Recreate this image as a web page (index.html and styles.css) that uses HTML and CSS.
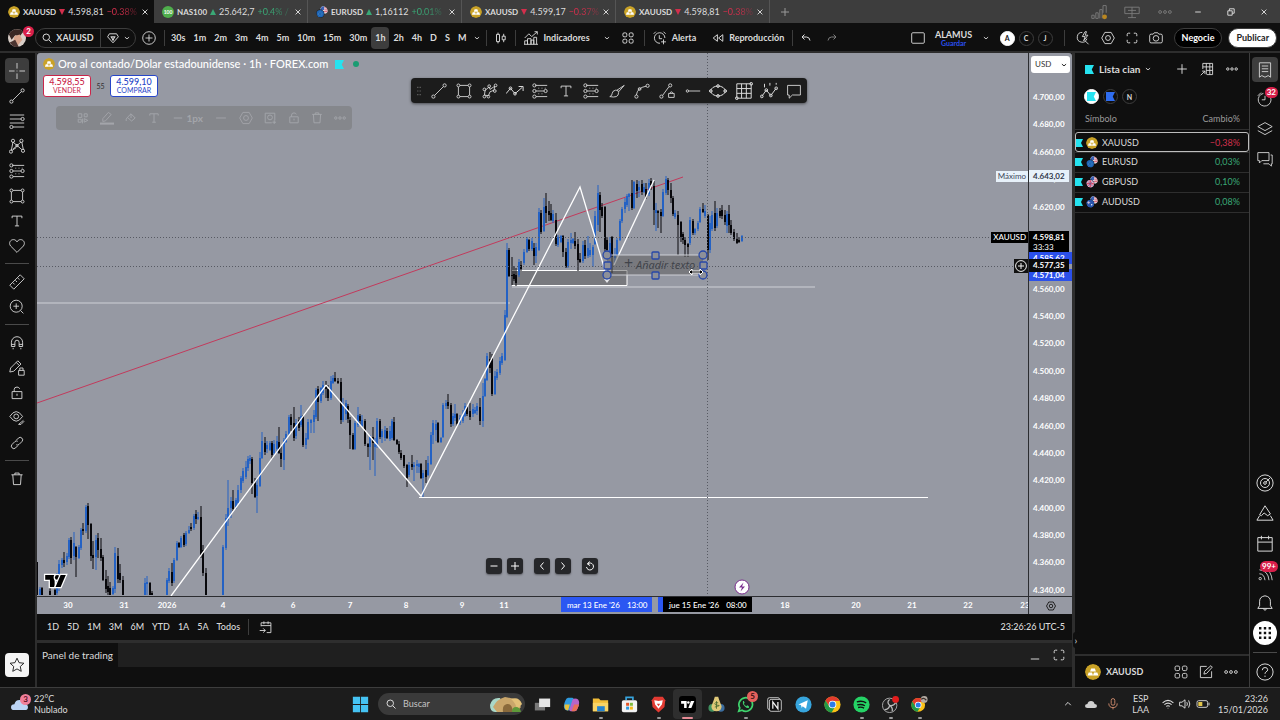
FILE: index.html
```html
<!DOCTYPE html>
<html lang="es">
<head>
    <meta charset="UTF-8">
    <meta name="viewport" content="width=device-width, initial-scale=1.0">
    <title>XAUUSD 4.598,81</title>
    <link rel="stylesheet" href="styles.css">
</head>
<body>

<!-- Icon sprite -->
<svg class="sprite" aria-hidden="true">
    <symbol id="gold" viewBox="0 0 20 20"><circle cx="10" cy="10" r="10" fill="#c9a227"/><path d="M7.7 5.5h4.6l1.4 4H6.3zM4.6 10.5h4.2l1.2 4H3.2zM11.2 10.5h4.2l1.4 4H10z" fill="#fff"/></symbol>
    <symbol id="pair" viewBox="0 0 20 20"><circle cx="13.5" cy="6.5" r="6.3" fill="#e9e4ea"/><path d="M8 3.4A6.3 6.3 0 0 1 13.5.2v6.3H7.2z" fill="#3c62b5"/><path d="M14 3h4.800M14 6.500h5.800M12 9.500h7" stroke="#d9475a" stroke-width="1.500"/><circle cx="7" cy="13" r="7" fill="#111"/><circle cx="7" cy="13" r="6.200" fill="#1f65b5"/><circle cx="7" cy="13" r="3" fill="none" stroke="#6fa6c9" stroke-dasharray="1 1.200"/></symbol>
    <symbol id="pair-gb" viewBox="0 0 20 20"><use href="#pair"/><circle cx="7" cy="13" r="6.200" fill="#e8a9bb"/><path d="M7 7v12M1 13h12" stroke="#cf3556" stroke-width="1.800"/><path d="M3 9l8 8M11 9l-8 8" stroke="#4667ad"/></symbol>
    <symbol id="pair-au" viewBox="0 0 20 20"><use href="#pair"/><circle cx="7" cy="13" r="6.200" fill="#2a55ad"/><path d="M2 11h5M4.500 8.500v5" stroke="#e8c8d8" stroke-width="1.200"/><circle cx="9.500" cy="14.500" r="1.200" fill="#fff"/></symbol>
    <symbol id="flag" viewBox="0 0 10 10"><path d="M0 0h10L7.500 5l2.500 5H0z" fill="currentColor"/></symbol>
    <symbol id="close" viewBox="0 0 20 20"><path d="M4 4l12 12M16 4L4 16"/></symbol>
    <symbol id="plus" viewBox="0 0 20 20"><path d="M10 2v16M2 10h16"/></symbol>
    <symbol id="minus" viewBox="0 0 20 20"><path d="M3 10h14"/></symbol>
    <symbol id="plus-circle" viewBox="0 0 20 20"><circle cx="10" cy="10" r="9"/><path d="M10 5v10M5 10h10"/></symbol>
    <symbol id="chevron" viewBox="0 0 20 20"><path d="M3 7l7 6 7-6"/></symbol>
    <symbol id="left" viewBox="0 0 20 20"><path d="M13 3l-6 7 6 7"/></symbol>
    <symbol id="right" viewBox="0 0 20 20"><path d="M7 3l6 7-6 7"/></symbol>
    <symbol id="up" viewBox="0 0 20 20"><path d="M3 13l7-7 7 7"/></symbol>
    <symbol id="search" viewBox="0 0 20 20"><circle cx="8.500" cy="8.500" r="6.500"/><path d="M13.500 13.500L19 19"/></symbol>
    <symbol id="gem" viewBox="0 0 20 20"><path d="M4 3h12l3 5-9 10L1 8zM6 8h8M10 8v6M7 8l3 6 3-6"/></symbol>
    <symbol id="more" viewBox="0 0 20 20"><circle cx="3" cy="10" r="2"/><circle cx="10" cy="10" r="2"/><circle cx="17" cy="10" r="2"/></symbol>
    <symbol id="candles" viewBox="0 0 20 20"><path d="M5 1v3M5 16v3M2.500 4h5v12h-5zM14.500 3v4M14.500 13v4M12 7h5v6h-5z"/></symbol>
    <symbol id="indicator" viewBox="0 0 20 20"><path d="M1 19v-5h4v5M5 19v-8h5v8M10 19v-6h4v6M14 19V9h4v10M0 19h20M1 10l6-6 4 4 8-7M19 1l-4 0M19 1v4"/></symbol>
    <symbol id="grid4" viewBox="0 0 20 20"><rect x="1.500" y="1.500" width="6.500" height="6.500" rx="2"/><rect x="12" y="1.500" width="6.500" height="6.500" rx="2"/><rect x="1.500" y="12" width="6.500" height="6.500" rx="2"/><rect x="12" y="12" width="6.500" height="6.500" rx="2"/></symbol>
    <symbol id="alarm" viewBox="0 0 20 20"><path d="M17 10a7.500 7.500 0 1 0-7 7.500M9 6v5h4M1 4l3-3M15 1l3 3M15 12v7M11.500 15.500h7"/></symbol>
    <symbol id="replay" viewBox="0 0 20 20"><path d="M9 4.500v11L2 10zM18 4.500v11L11 10z"/></symbol>
    <symbol id="undo" viewBox="0 0 20 20"><path d="M7 3L2 8l5 5M2 8h9q6 0 7 7"/></symbol>
    <symbol id="redo" viewBox="0 0 20 20"><path d="M13 3l5 5-5 5M18 8H9q-6 0-7 7"/></symbol>
    <symbol id="layout" viewBox="0 0 20 20"><rect x="1" y="2.500" width="18" height="15" rx="1.500"/></symbol>
    <symbol id="quick" viewBox="0 0 20 20"><path d="M9 2a7 7 0 1 0 6.500 9M13 14l5 5M13 1L9 8h4l-2 6 6-8h-4l2-5z"/></symbol>
    <symbol id="hex" viewBox="0 0 20 20"><path d="M5.500 2h9L19 10l-4.500 8h-9L1 10z"/><circle cx="10" cy="10" r="3.500"/></symbol>
    <symbol id="full" viewBox="0 0 20 20"><path d="M2 7V4q0-2 2-2h3M13 2h3q2 0 2 2v3M18 13v3q0 2-2 2h-3M7 18H4q-2 0-2-2v-3"/></symbol>
    <symbol id="camera" viewBox="0 0 20 20"><path d="M3 4.500h3L7.500 2.500h5L14 4.500h3q2 0 2 2V15q0 2-2 2H3q-2 0-2-2V6.500q0-2 2-2z"/><circle cx="10" cy="10.500" r="4"/></symbol>
    <symbol id="signal" viewBox="0 0 20 20"><path d="M1 18v-4h3v4zM6 18v-7h3v7zM11 18V7h3v11M19 11V2h-4v9"/><circle cx="17" cy="16" r="3" fill="#b98620" stroke="none"/></symbol>
    <symbol id="screens" viewBox="0 0 20 20"><path d="M1 4h18v8H1zM10 4v8M10 12v5M5 17h10M5 8h10"/></symbol>
    <symbol id="restore" viewBox="0 0 20 20"><path d="M2 7h11v11H2zM6 7V2h12v11h-5"/></symbol>
    <symbol id="cross" viewBox="0 0 20 20"><path d="M10 0v7M10 13v7M0 10h7M13 10h7M9.500 10h1"/></symbol>
    <symbol id="trend" viewBox="0 0 20 20"><circle cx="3" cy="17" r="2"/><circle cx="17" cy="3" r="2"/><path d="M4.500 15.500l11-11"/></symbol>
    <symbol id="fib" viewBox="0 0 20 20"><path d="M1 2.500h18M1 7.500h14M1 12.500h18M5 17.500h14"/><circle cx="17" cy="7.500" r="2"/><circle cx="3" cy="17.500" r="2"/></symbol>
    <symbol id="pattern" viewBox="0 0 20 20"><path d="M3 15L5 5l11 9.500M16 5l2 10M5 14l10-9M3 16l6-4"/><circle cx="5" cy="3.500" r="2"/><circle cx="15.500" cy="3.500" r="2"/><circle cx="2.500" cy="17" r="2"/><circle cx="17.500" cy="16" r="2"/><circle cx="10" cy="9.500" r="1.500"/></symbol>
    <symbol id="position" viewBox="0 0 20 20"><path d="M4 3h15M5 10h10M5 17h14M8 6.500h1M12 6.500h1M16 6.500h1M8 13.500h1M12 13.500h1"/><circle cx="3" cy="3" r="2"/><circle cx="3" cy="10" r="2"/><circle cx="17" cy="10" r="2"/><circle cx="3" cy="17" r="2"/></symbol>
    <symbol id="rect" viewBox="0 0 20 20"><path d="M5 3h10M5 17h10M3 5v10M17 5v10"/><circle cx="3" cy="3" r="1.800"/><circle cx="17" cy="3" r="1.800"/><circle cx="3" cy="17" r="1.800"/><circle cx="17" cy="17" r="1.800"/></symbol>
    <symbol id="text" viewBox="0 0 20 20"><path d="M3 6V3h14v3M10 3v14M7 17h6"/></symbol>
    <symbol id="heart" viewBox="0 0 20 20"><path d="M10 18L2 10C-1 6 2 2 5.500 2 8 2 9.300 3.500 10 5c.7-1.500 2-3 4.500-3C18 2 21 6 18 10z"/></symbol>
    <symbol id="ruler" viewBox="0 0 20 20"><path d="M1 14L14 1l5 5L6 19zM5 11l2 2M8 8l2 2M11 5l2 2"/></symbol>
    <symbol id="zoom" viewBox="0 0 20 20"><circle cx="9" cy="9" r="7.500"/><path d="M14.500 14.500L18 18M9 5.500v7M5.500 9h7"/></symbol>
    <symbol id="magnet" viewBox="0 0 20 20"><path d="M2 15V9a8 8 0 0 1 16 0v6h-5V9a3 3 0 0 0-6 0v6zM2 12h5M13 12h5M4.500 17v2M15.500 17v2"/></symbol>
    <symbol id="penlock" viewBox="0 0 20 20"><path d="M1 15l1-5 9-9 4 4-9 9zM9 3l4 4M12 13h7v6h-7zM13.500 13v-3h4v3"/></symbol>
    <symbol id="unlock" viewBox="0 0 20 20"><path d="M3 8h14v10H3zM6 8V5q0-3.500 4-3.500 3 0 3.800 2.500M10 11v3"/></symbol>
    <symbol id="eye" viewBox="0 0 20 20"><path d="M1 8q8-12 16 0-8 12-16 0zM12 18l6-5M12 18h3l4-4"/><circle cx="9" cy="8" r="3"/></symbol>
    <symbol id="link" viewBox="0 0 20 20"><path d="M9 6l3-3a3.500 3.500 0 0 1 5 5l-4 4a3.500 3.500 0 0 1-4 .5M11 14l-3 3a3.500 3.500 0 0 1-5-5l4-4a3.500 3.500 0 0 1 4-.5"/></symbol>
    <symbol id="trash" viewBox="0 0 20 20"><path d="M2 4h16M7 4V1.500h6V4M4 4l1 14h10l1-14"/></symbol>
    <symbol id="star" viewBox="0 0 20 20"><path d="M10 1.500l2.600 5.600 6 .7-4.500 4.100 1.200 6-5.300-3-5.300 3 1.200-6L1.400 7.800l6-.7z"/></symbol>
    <symbol id="dots" viewBox="0 0 8 20"><path d="M1 4h2M5 4h2M1 10h2M5 10h2M1 16h2M5 16h2" stroke-width="2"/></symbol>
    <symbol id="nodes" viewBox="0 0 20 20"><path d="M3 15l1-6 5-4 1 3 6-4-1 5-5 2-2 5z"/><circle cx="3" cy="17" r="1.700"/><circle cx="3" cy="8" r="1.700"/><circle cx="9" cy="4" r="1.700"/><circle cx="17" cy="3" r="1.700"/><circle cx="16" cy="10" r="1.700"/><circle cx="8" cy="17" r="1.700"/></symbol>
    <symbol id="zigzag" viewBox="0 0 20 20"><path d="M0 13l5-6 5 6 8-7M14 5h5v5"/><circle cx="5" cy="7" r="1.500"/><circle cx="10" cy="13" r="1.500"/></symbol>
    <symbol id="brush" viewBox="0 0 20 20"><path d="M1 17q3-1 3-4t4-4 4 3-3 5-8 0zM10 9l9-6M12 11l7-8"/></symbol>
    <symbol id="curve" viewBox="0 0 20 20"><path d="M3 15q1-9 12-11"/><circle cx="3" cy="17" r="2"/><circle cx="17" cy="3.500" r="2"/><circle cx="7" cy="7.500" r="1.700"/></symbol>
    <symbol id="trendlock" viewBox="0 0 20 20"><circle cx="3" cy="17" r="2"/><circle cx="14" cy="3" r="2"/><path d="M4.500 15.500l8-11M12 13h7v5h-7zM13.500 13q2-4 4 0"/></symbol>
    <symbol id="hline" viewBox="0 0 20 20"><circle cx="3" cy="10" r="1.500"/><path d="M4.500 10H19"/></symbol>
    <symbol id="ellipse" viewBox="0 0 20 20"><ellipse cx="10" cy="10" rx="8" ry="5.500"/><circle cx="2" cy="10" r="1.500"/><circle cx="18" cy="10" r="1.500"/><circle cx="10" cy="4.500" r="1.500"/><circle cx="10" cy="15.500" r="1.500"/></symbol>
    <symbol id="gann" viewBox="0 0 20 20"><path d="M2 2h16v16H2zM7.300 2v16M12.600 2v16M2 7.300h16M2 12.600h16"/><circle cx="18" cy="2" r="1.500"/><circle cx="2" cy="18" r="1.500"/></symbol>
    <symbol id="elliott" viewBox="0 0 20 20"><path d="M2 16l5-7 5 6 6-8M5 2v4M11 1v3M18 1v2"/><circle cx="2" cy="16" r="1.500"/><circle cx="7" cy="9" r="1.500"/><circle cx="12" cy="15" r="1.500"/><circle cx="18" cy="7" r="1.500"/></symbol>
    <symbol id="comment" viewBox="0 0 20 20"><path d="M2 3h16v12H8l-4 4v-4H2z"/></symbol>
    <symbol id="template" viewBox="0 0 20 20"><path d="M2 3h6v6H2zM12 3h5v5h-5zM2 12h5v5H2zM12 11l6 3-6 3zM9 11v8"/></symbol>
    <symbol id="pencil" viewBox="0 0 20 20"><path d="M4 11L12 2l4 3-8 9-4 1z"/><path d="M0 18h20" stroke-width="3"/></symbol>
    <symbol id="bucket" viewBox="0 0 20 20"><path d="M4 9l6-6 7 7-6 5zM10 3v7M4 9q-3 3-2 6"/></symbol>
    <symbol id="clone" viewBox="0 0 20 20"><path d="M2 2h16v12M2 2v16h11"/><circle cx="10" cy="9" r="4"/><path d="M14 17h6M17 14v6"/></symbol>
    <symbol id="table" viewBox="0 0 20 20"><path d="M4 10V2h14v16h-8M4 7h14M9 2v16M14 2v16M9 12h9M1 19l6-6M3 13h4v4"/></symbol>
    <symbol id="list" viewBox="0 0 20 20"><path d="M3 1h14v18l-3-2-4 2-4-2-3 2zM6 5h8M6 8.500h8M6 12h8"/></symbol>
    <symbol id="clock" viewBox="0 0 20 20"><path d="M8 3a8 8 0 1 0 9 5M10 6v5H6M1 6l4-4"/></symbol>
    <symbol id="layers" viewBox="0 0 20 20"><path d="M10 2l9 5-9 5-9-5zM1 12l9 5 9-5"/></symbol>
    <symbol id="chat" viewBox="0 0 20 20"><path d="M1 2h14v10H6l-3 3v-3H1zM17 5h2v11h-1v3l-3-3H8"/></symbol>
    <symbol id="target" viewBox="0 0 20 20"><circle cx="10" cy="10" r="9"/><circle cx="10" cy="10" r="5"/><circle cx="10" cy="10" r="1.500"/><path d="M11 9l5-5"/></symbol>
    <symbol id="pine" viewBox="0 0 20 20"><path d="M1 18h18l-3-5M4 13l-3 5M4 12l6-10 6 9-3 2-4-3-3 3z"/></symbol>
    <symbol id="calendar" viewBox="0 0 20 20"><path d="M2 4h16v15H2zM2 9h16M6 2v4M14 2v4"/></symbol>
    <symbol id="feed" viewBox="0 0 20 20"><circle cx="4" cy="17" r="1.500"/><path d="M3 11q6 0 7 8M3 6q11 1 12 13M10 4q8 4 9 15"/></symbol>
    <symbol id="bell" viewBox="0 0 20 20"><path d="M2 16h16l-2-3V8q0-5-6-6-6 1-6 6v5zM8 16q2 4 4 0"/></symbol>
    <symbol id="help" viewBox="0 0 20 20"><circle cx="10" cy="10" r="9"/><path d="M7 8q0-3 3-3t3 2.500q0 1.500-2 2.500-1 .7-1 2M10 14v1.500"/></symbol>
    <symbol id="goto" viewBox="0 0 20 20"><path d="M3 9V4h14v14h-6M3 8h14M7 2v4M13 2v4M1 15h8M6 12l3 3-3 3"/></symbol>
    <symbol id="edit" viewBox="0 0 20 20"><path d="M11 2H2v16h16V9M7 13l1-4 9-8 2 2-8 9z"/></symbol>
    <symbol id="reload" viewBox="0 0 20 20"><path d="M5 6a7 7 0 1 1-2 6M9 1L5 6l5 3"/></symbol>
    <symbol id="tv" viewBox="0 0 24 14"><path d="M0 0h11v14H5.500V5.500H0z"/><circle cx="14" cy="2.800" r="2.700"/><path d="M18 0h6l-6 14h-6z"/></symbol>
    <symbol id="chrome" viewBox="0 0 20 20"><circle cx="10" cy="10" r="9.500" fill="#fbc116"/><path d="M10 .5A9.500 9.500 0 0 0 1.800 5.200L6 12l4-6h8.500A9.500 9.500 0 0 0 10 .5z" fill="#e33b2e"/><path d="M1.800 5.200A9.500 9.500 0 0 0 9 19.500l4-7-7-.5z" fill="#229a48"/><circle cx="10" cy="10" r="4.500" fill="#fff"/><circle cx="10" cy="10" r="3.500" fill="#2d7ce8"/></symbol>
</svg>

<div class="app">

    <!-- Window tabs -->
    <header class="tabs">
        <div class="tab active"><svg class="coin"><use href="#gold"/></svg><b>XAUUSD</b><i class="down"></i><span>4.598,81</span><span class="neg fade">−0.38%</span><button class="tab-close" aria-label="Cerrar"><svg class="ic s8"><use href="#close"/></svg></button></div>
        <div class="tab"><span class="coin green">100</span><b>NAS100</b><i class="up"></i><span>25.642,7</span><span class="pos fade">+0.4% /</span><button class="tab-close" aria-label="Cerrar"><svg class="ic s8"><use href="#close"/></svg></button></div>
        <div class="tab"><svg class="coin"><use href="#pair"/></svg><b>EURUSD</b><i class="up"></i><span>1,16112</span><span class="pos fade">+0.01%</span><button class="tab-close" aria-label="Cerrar"><svg class="ic s8"><use href="#close"/></svg></button></div>
        <div class="tab"><svg class="coin"><use href="#gold"/></svg><b>XAUUSD</b><i class="down"></i><span>4.599,17</span><span class="neg fade">−0.37%</span><button class="tab-close" aria-label="Cerrar"><svg class="ic s8"><use href="#close"/></svg></button></div>
        <div class="tab"><svg class="coin"><use href="#gold"/></svg><b>XAUUSD</b><i class="down"></i><span>4.598,81</span><span class="neg fade">−0.38%</span><button class="tab-close" aria-label="Cerrar"><svg class="ic s8"><use href="#close"/></svg></button></div>
        <button class="new-tab" aria-label="Nueva"><svg class="ic s10"><use href="#plus"/></svg></button>
        <div class="window-tools">
            <button aria-label="Red"><svg class="ic s16 dim"><use href="#signal"/></svg></button>
            <button aria-label="Pantallas"><svg class="ic s16 dim"><use href="#screens"/></svg></button>
            <button aria-label="Menú"><svg class="ic s14 dim"><use href="#more"/></svg></button>
            <button aria-label="Minimizar"><svg class="ic s8"><use href="#minus"/></svg></button>
            <button aria-label="Restaurar"><svg class="ic s8"><use href="#restore"/></svg></button>
            <button aria-label="Cerrar"><svg class="ic s8"><use href="#close"/></svg></button>
        </div>
    </header>

    <!-- Top toolbar -->
    <nav class="toolbar">
        <button class="avatar" aria-label="Perfil">
            <svg viewBox="0 0 20 20"><circle cx="10" cy="10" r="10" fill="#d9cfc8"/><path d="M1 6A10 10 0 0 1 17 3l-4 5-5-1-4 5z" fill="#3a2824"/><path d="M7 8l6-2 3 6-5 6-5-4z" fill="#d9a58c"/><path d="M2 15l6-3 4 8a10 10 0 0 1-10-5z" fill="#4b3430"/></svg>
            <span class="badge">2</span>
        </button>
        <div class="symbol-box">
            <button class="symbol"><svg class="ic s10"><use href="#search"/></svg>XAUUSD</button>
            <button class="gem" aria-label="Símbolos"><svg class="ic s12"><use href="#gem"/></svg><svg class="ic s6"><use href="#chevron"/></svg></button>
        </div>
        <button class="add" aria-label="Comparar"><svg class="ic s14"><use href="#plus-circle"/></svg></button>
        <span class="vsep"></span>
        <div class="intervals">
            <button>30s</button><button>1m</button><button>2m</button><button>3m</button><button>4m</button><button>5m</button><button>10m</button><button>15m</button><button>30m</button><button class="on">1h</button><button>2h</button><button>4h</button><button>D</button><button>S</button><button>M</button>
            <button aria-label="Más"><svg class="ic s6"><use href="#chevron"/></svg></button>
        </div>
        <span class="vsep"></span>
        <button class="pad" aria-label="Velas"><svg class="ic s12"><use href="#candles"/></svg></button>
        <span class="vsep"></span>
        <button class="pad"><svg class="ic s14"><use href="#indicator"/></svg>Indicadores</button>
        <button class="pad narrow" aria-label="Favoritos"><svg class="ic s6"><use href="#chevron"/></svg></button>
        <button class="pad narrow" aria-label="Plantillas"><svg class="ic s12"><use href="#grid4"/></svg></button>
        <span class="vsep after"></span>
        <button class="pad"><svg class="ic s14"><use href="#alarm"/></svg>Alerta</button>
        <button class="pad"><svg class="ic s12"><use href="#replay"/></svg>Reproducción</button>
        <span class="vsep"></span>
        <button class="pad" aria-label="Deshacer"><svg class="ic s10"><use href="#undo"/></svg></button>
        <button class="pad" aria-label="Rehacer"><svg class="ic s10 dim"><use href="#redo"/></svg></button>

        <div class="toolbar-right">
            <button aria-label="Diseño"><svg class="ic s14"><use href="#layout"/></svg></button>
            <button class="layout-name">ALAMUS<small>Guardar</small></button>
            <button aria-label="Diseños"><svg class="ic s6"><use href="#chevron"/></svg></button>
            <span class="rounds"><button class="round white">A</button><button class="round">C</button><button class="round">J</button></span>
            <span class="vsep"></span>
            <button aria-label="Búsqueda rápida"><svg class="ic s14"><use href="#quick"/></svg></button>
            <button aria-label="Configuración"><svg class="ic s14"><use href="#hex"/></svg></button>
            <button aria-label="Pantalla completa"><svg class="ic s12"><use href="#full"/></svg></button>
            <button aria-label="Captura"><svg class="ic s14"><use href="#camera"/></svg></button>
            <span class="actions"><button class="pill">Negocie</button><button class="pill white">Publicar</button></span>
        </div>
    </nav>

    <div class="workspace">

        <!-- Drawing tools -->
        <aside class="draw-rail">
            <button class="on" aria-label="Cursor"><svg class="ic"><use href="#cross"/></svg></button>
            <button aria-label="Línea"><svg class="ic"><use href="#trend"/></svg></button>
            <button aria-label="Fibonacci"><svg class="ic"><use href="#fib"/></svg></button>
            <button aria-label="Patrones"><svg class="ic"><use href="#pattern"/></svg></button>
            <button aria-label="Posición"><svg class="ic"><use href="#position"/></svg></button>
            <button aria-label="Formas"><svg class="ic"><use href="#rect"/></svg></button>
            <button aria-label="Texto"><svg class="ic s14"><use href="#text"/></svg></button>
            <button aria-label="Iconos"><svg class="ic"><use href="#heart"/></svg></button>
            <hr>
            <button aria-label="Medir"><svg class="ic"><use href="#ruler"/></svg></button>
            <button aria-label="Ampliar"><svg class="ic"><use href="#zoom"/></svg></button>
            <hr>
            <button aria-label="Imán"><svg class="ic s14"><use href="#magnet"/></svg></button>
            <button aria-label="Modo dibujo"><svg class="ic"><use href="#penlock"/></svg></button>
            <button aria-label="Bloquear"><svg class="ic s14"><use href="#unlock"/></svg></button>
            <button aria-label="Ocultar"><svg class="ic"><use href="#eye"/></svg></button>
            <button aria-label="Sincronizar"><svg class="ic s14"><use href="#link"/></svg></button>
            <hr>
            <button aria-label="Eliminar"><svg class="ic s14"><use href="#trash"/></svg></button>
            <button class="fav" aria-label="Herramientas favoritas"><svg class="ic"><use href="#star"/></svg></button>
        </aside>

        <main class="center">
            <section class="chart">
                <div class="plot">
                    <svg class="canvas" id="canvas">
                        <rect class="zone" x="475" y="217" width="115" height="16"/>
                        <path class="zone-line" d="M475 217.500h115M475 232.500h115v-15"/>
                        <path class="level soft" d="M0 250h473M475 234h303"/>
                        <path class="level" d="M382 444.500h509"/>
                        <path class="trend-red" d="M0 350L646 124"/>
                        <g id="candles-layer"></g>
                        <polyline class="swing" points="134,543 289,332 384,443 543,134 570,224"/>
                        <path class="swing" d="M577 212L617 127"/>
                        <rect class="zone" x="570" y="202" width="96" height="20"/>
                        <path class="level soft" d="M570 202h96M570 222h96"/>
                        <path class="arrow-end" d="M567 226h6l-3 4z"/>
                        <path class="guide" d="M0 184.500h992M0 213.500h992M670.500 0v543"/>
                        <text class="add-text" x="587" y="216"><tspan class="add-plus">+</tspan> Añadir texto</text>
                        <g class="handle">
                            <circle cx="570" cy="202" r="4"/><circle cx="666" cy="202" r="4"/><circle cx="570" cy="222" r="4"/><circle cx="666" cy="222" r="4"/>
                            <rect x="567" y="209" width="7" height="7" rx="1"/><rect x="663" y="209" width="7" height="7" rx="1"/><rect x="615" y="199" width="7" height="7" rx="1"/><rect x="615" y="219" width="7" height="7" rx="1"/>
                        </g>
                        <path class="resize" d="M652 219l3-3v2h8v-2l3 3-3 3v-2h-8v2z"/>
                    </svg>

                    <div class="legend">
                        <svg class="coin"><use href="#gold"/></svg>
                        <span>Oro al contado/Dólar estadounidense · 1h · FOREX.com</span>
                        <svg class="flag"><use href="#flag"/></svg>
                        <i class="live"></i>
                    </div>
                    <div class="quotes">
                        <button class="quote sell">4.598,55<small>VENDER</small></button>
                        <span class="spread">55</span>
                        <button class="quote buy">4.599,10<small>COMPRAR</small></button>
                    </div>

                    <div class="float-bar ghost">
                        <svg class="ic s12"><use href="#template"/></svg>
                        <svg class="ic s14"><use href="#pencil"/></svg>
                        <svg class="ic s12"><use href="#bucket"/></svg>
                        <svg class="ic s12"><use href="#text"/></svg>
                        <span class="width"><svg class="ic s12"><use href="#minus"/></svg>1px</span>
                        <svg class="ic s14"><use href="#minus"/></svg>
                        <svg class="ic s14"><use href="#hex"/></svg>
                        <svg class="ic s12"><use href="#clone"/></svg>
                        <svg class="ic s12"><use href="#unlock"/></svg>
                        <svg class="ic s12"><use href="#trash"/></svg>
                        <svg class="ic s12"><use href="#more"/></svg>
                    </div>

                    <div class="float-bar favorites">
                        <svg class="ic grip"><use href="#dots"/></svg>
                        <button aria-label="Línea"><svg class="ic"><use href="#trend"/></svg></button>
                        <button aria-label="Rectángulo"><svg class="ic"><use href="#rect"/></svg></button>
                        <button aria-label="Ruta"><svg class="ic"><use href="#nodes"/></svg></button>
                        <button aria-label="Zigzag"><svg class="ic s18"><use href="#zigzag"/></svg></button>
                        <button aria-label="Posición larga"><svg class="ic"><use href="#position"/></svg></button>
                        <button aria-label="Texto"><svg class="ic s14"><use href="#text"/></svg></button>
                        <button aria-label="Posición corta"><svg class="ic"><use href="#position"/></svg></button>
                        <button aria-label="Pincel"><svg class="ic"><use href="#brush"/></svg></button>
                        <button aria-label="Curva"><svg class="ic"><use href="#curve"/></svg></button>
                        <button aria-label="Línea de información"><svg class="ic"><use href="#trendlock"/></svg></button>
                        <button aria-label="Rayo horizontal"><svg class="ic"><use href="#hline"/></svg></button>
                        <button aria-label="Elipse"><svg class="ic s18"><use href="#ellipse"/></svg></button>
                        <button aria-label="Gann"><svg class="ic s18"><use href="#gann"/></svg></button>
                        <button aria-label="Elliott"><svg class="ic s18"><use href="#elliott"/></svg></button>
                        <button aria-label="Comentario"><svg class="ic"><use href="#comment"/></svg></button>
                    </div>

                    <svg class="tv-logo"><use href="#tv"/></svg>
                    <div class="nav-buttons">
                        <button aria-label="Alejar"><svg class="ic s10"><use href="#minus"/></svg></button>
                        <button aria-label="Acercar"><svg class="ic s10"><use href="#plus"/></svg></button>
                        <button class="apart" aria-label="Izquierda"><svg class="ic s10"><use href="#left"/></svg></button>
                        <button aria-label="Derecha"><svg class="ic s10"><use href="#right"/></svg></button>
                        <button class="apart" aria-label="Restablecer"><svg class="ic s10"><use href="#reload"/></svg></button>
                    </div>
                    <svg class="event" viewBox="0 0 16 16"><circle cx="8" cy="8" r="7" fill="#fff" stroke="#7b2d8e"/><path d="M9.500 3.500L5 8.500h3l-1.500 4L11 7.500H8z" fill="#7b2d8e"/></svg>

                    <span class="tag max-tag">Máximo</span>
                    <span class="tag last-tag">XAUUSD</span>
                    <span class="tag cross-tag"><svg class="ic s12"><use href="#plus-circle"/></svg></span>
                </div>

                <div class="price-axis">
                    <div class="currency">
                        <select aria-label="Moneda"><option>USD</option></select>
                        <svg class="ic s6"><use href="#chevron"/></svg>
                    </div>
                    <div class="prices" id="prices"></div>
                    <span class="price max">4.643,02</span>
                    <span class="price range-top">4.585,62</span>
                    <span class="price range-bottom">4.571,04</span>
                    <span class="price last">4.598,81<small>33:33</small></span>
                    <span class="price cursor">4.577,35</span>
                </div>

                <div class="time-axis">
                    <svg id="times"></svg>
                    <span class="time range-start">mar 13 Ene '26 <span>13:00</span></span>
                    <span class="time cursor">jue 15 Ene '26 <span>08:00</span></span>
                </div>
                <button class="axis-settings" aria-label="Ajustes de escala"><svg class="ic s10"><use href="#hex"/></svg></button>
            </section>

            <footer class="ranges">
                <button>1D</button><button>5D</button><button>1M</button><button>3M</button><button>6M</button><button>YTD</button><button>1A</button><button>5A</button><button>Todos</button>
                <span class="vsep"></span>
                <button aria-label="Ir a"><svg class="ic s14"><use href="#goto"/></svg></button>
                <button class="utc">23:26:26 UTC-5</button>
            </footer>

            <section class="trading">
                <div class="trading-tabs">
                    <button class="trading-tab">Panel de trading</button>
                    <div class="trading-tools">
                        <button aria-label="Minimizar panel"><svg class="ic s12 low"><use href="#minus"/></svg></button>
                        <button aria-label="Maximizar panel"><svg class="ic s12"><use href="#full"/></svg></button>
                    </div>
                </div>
            </section>
        </main>

        <!-- Watchlist -->
        <aside class="watch">
            <button class="collapse" aria-label="Contraer">›</button>
            <div class="watch-head">
                <button class="watch-name"><svg class="flag"><use href="#flag"/></svg>Lista cian<svg class="ic s6"><use href="#chevron"/></svg></button>
                <button aria-label="Añadir"><svg class="ic s12"><use href="#plus"/></svg></button>
                <button aria-label="Tabla"><svg class="ic s14"><use href="#table"/></svg></button>
                <button aria-label="Más"><svg class="ic s12"><use href="#more"/></svg></button>
            </div>
            <div class="watch-lists">
                <button class="round white" aria-label="Cian"><svg class="flag"><use href="#flag"/></svg></button>
                <button class="round" aria-label="Azul"><svg class="flag blue"><use href="#flag"/></svg></button>
                <button class="round">N</button>
            </div>
            <table>
                <thead><tr><th>Símbolo</th><th>Cambio%</th></tr></thead>
                <tbody>
                    <tr class="selected"><td><div class="cell"><svg class="flag"><use href="#flag"/></svg><svg class="coin"><use href="#gold"/></svg>XAUUSD</div></td><td class="neg">−0,38%</td></tr>
                    <tr><td><div class="cell"><svg class="flag"><use href="#flag"/></svg><svg class="coin"><use href="#pair"/></svg>EURUSD</div></td><td class="pos">0,03%</td></tr>
                    <tr><td><div class="cell"><svg class="flag"><use href="#flag"/></svg><svg class="coin"><use href="#pair-gb"/></svg>GBPUSD</div></td><td class="pos">0,10%</td></tr>
                    <tr><td><div class="cell"><svg class="flag"><use href="#flag"/></svg><svg class="coin"><use href="#pair-au"/></svg>AUDUSD</div></td><td class="pos">0,08%</td></tr>
                </tbody>
            </table>
            <div class="details">
                <svg class="coin big"><use href="#gold"/></svg><b>XAUUSD</b>
                <button aria-label="Vista"><svg class="ic s14"><use href="#grid4"/></svg></button>
                <button aria-label="Nota"><svg class="ic s14"><use href="#edit"/></svg></button>
                <button aria-label="Más"><svg class="ic s14"><use href="#more"/></svg></button>
            </div>
        </aside>

        <!-- Widget rail -->
        <aside class="widget-rail">
            <button class="on" aria-label="Lista"><svg class="ic"><use href="#list"/></svg></button>
            <button aria-label="Alertas"><svg class="ic"><use href="#clock"/></svg><span class="badge">32</span></button>
            <button aria-label="Objetos"><svg class="ic"><use href="#layers"/></svg></button>
            <button aria-label="Chats"><svg class="ic"><use href="#chat"/></svg></button>
            <span class="spacer"></span>
            <button aria-label="Screener"><svg class="ic s18"><use href="#target"/></svg></button>
            <button aria-label="Pine"><svg class="ic s18"><use href="#pine"/></svg></button>
            <button aria-label="Calendario"><svg class="ic s18"><use href="#calendar"/></svg></button>
            <button aria-label="Noticias"><svg class="ic"><use href="#feed"/></svg><span class="badge">99+</span></button>
            <button aria-label="Notificaciones"><svg class="ic s18"><use href="#bell"/></svg></button>
            <button class="products" aria-label="Productos"><svg viewBox="0 0 20 20"><circle cx="10" cy="10" r="10" fill="#fff"/><path d="M5 6h2M9 6h2M13 6h2M5 10h2M9 10h2M13 10h2M5 14h2M9 14h2M13 14h2" stroke="#111" stroke-width="2"/></svg></button>
            <hr>
            <button aria-label="Ayuda"><svg class="ic s18"><use href="#help"/></svg></button>
        </aside>
    </div>

    <!-- Taskbar -->
    <footer class="taskbar">
        <div class="weather">
            <span class="cloud"><svg viewBox="0 0 20 14"><path d="M4 13q-4 0-4-3.500T4 6q1-5 6-5t6 5q4 0 4 3.500T16 13z" fill="#bcd4f5"/></svg><span class="badge pink">3</span></span>
            <span>22°C<br>Nublado</span>
        </div>
        <div class="dock">
            <button aria-label="Inicio"><svg viewBox="0 0 20 20"><path d="M1 1h8.500v8.500H1zM10.500 1H19v8.500h-8.500zM1 10.500h8.500V19H1zM10.500 10.500H19V19h-8.500z" fill="#45c3f3"/></svg></button>
            <label class="find"><svg class="ic s10"><use href="#search"/></svg><input type="text" placeholder="Buscar" aria-label="Buscar"><svg class="find-art" viewBox="0 0 34 18"><path d="M1 10Q3 2 11 3l3 8-3 6H6Q1 17 1 10z" fill="#a9d8c8"/><path d="M4 12q4-8 12-10l10 2 6 8-4 5H8z" fill="#c9a66b"/><path d="M14 17q-1-7 4-8t6 8z" fill="#8a6a3c"/><path d="M22 4q8-3 11 5l-5 6q-1-7-6-11z" fill="#e2c078"/><path d="M23 17q0-5 4-5t5 5z" fill="#5f9a3a"/></svg></label>
            <button aria-label="Vista de tareas"><svg viewBox="0 0 20 20"><path d="M1 8h12v9H1z" fill="#777"/><path d="M6 3h13v10H6z" fill="#e6e6e6"/></svg></button>
            <button aria-label="Copilot"><svg viewBox="0 0 20 20"><path d="M6 2h5q2 0 1.500 2L9 15q-.5 2-3 2-5 0-5-5 0-3 2-7 1-3 3-3z" fill="#2f9be0"/><path d="M14 18H9q-2 0-1.500-2L11 5q.5-2 3-2 5 0 5 5 0 3-2 7-1 3-3 3z" fill="#b765c9"/><path d="M2 10l6 0-2 7q-5 0-4-7z" fill="#e8c23d"/><path d="M13 10h6l-2 5q-1 3-4 3h-3z" fill="#e8705a"/></svg></button>
            <button class="run" aria-label="Explorador"><svg viewBox="0 0 20 20"><path d="M1 3h7l2 2h9v13H1z" fill="#f2bd38"/><path d="M1 8h18v10H1z" fill="#f9d465"/><path d="M6 12h9v6H6z" fill="#2583cf"/></svg></button>
            <button aria-label="Tienda"><svg viewBox="0 0 20 20"><path d="M6 5V1.500h8V5" fill="none" stroke="#37a4dd" stroke-width="2"/><rect x="1" y="5" width="18" height="14" rx="2" fill="#f2f2f2"/><path d="M6 8h3.500v3.500H6z" fill="#e35325"/><path d="M10.500 8H14v3.500h-3.500z" fill="#7eb93c"/><path d="M6 12.500h3.500V16H6z" fill="#2b9ae0"/><path d="M10.500 12.500H14V16h-3.500z" fill="#f5b91c"/></svg></button>
            <button class="run" aria-label="Brave"><svg viewBox="0 0 20 20"><path d="M5 1h10l3 4-1 8-7 6.500L3 13 2 5z" fill="#e23a32"/><path d="M5 5l5 1 5-1-1 5-4 5-4-5zM8 9l2 3 2-3z" fill="#fff" fill-rule="evenodd"/></svg></button>
            <button class="run current" aria-label="TradingView"><svg viewBox="0 0 20 20"><rect width="20" height="20" rx="4" fill="#000"/><g fill="#fff"><path d="M2.500 6H9v8H6V9H2.500z"/><circle cx="11" cy="7.600" r="1.500"/><path d="M14 6h4l-3.500 8h-3.500z"/></g></svg></button>
            <button aria-label="Finanzas"><svg viewBox="0 0 20 20"><circle cx="5" cy="14" r="4.500" fill="#3f8f5f"/><circle cx="15" cy="14" r="4.500" fill="#3c6ea0"/><path d="M7 4l1-3h4l1 3 3 8q0 6-6 6t-6-6z" fill="#dfc878"/><path d="M12 8q-4-1-4 1t4 2-4 2M10 6v9" stroke="#4a6a30" fill="none"/></svg></button>
            <button class="run" aria-label="WhatsApp"><svg viewBox="0 0 20 20"><path d="M2 18l1.300-4A8 8 0 1 1 6 16.800z" fill="none" stroke="#3fd46d" stroke-width="2"/><path d="M7 6q-1 3 2 6t5 2l0-2-2-1-1 1q-2-1-3-3l1-1-1-2z" fill="#3fd46d"/></svg><span class="badge coral">5</span></button>
            <button aria-label="Notion"><svg viewBox="0 0 20 20"><rect x="2" y="2" width="14" height="14" rx="2" fill="none" stroke="#ddd"/><rect x="4" y="4" width="14" height="14" rx="2" fill="#111" stroke="#ddd"/><path d="M8 15V7l6 8V7" fill="none" stroke="#eee" stroke-width="1.500"/></svg></button>
            <button aria-label="Telegram"><svg viewBox="0 0 20 20"><circle cx="10" cy="10" r="9.500" fill="#37a5dd"/><path d="M4 10l11-5-2 10-4-3-1 2-1-3.500z" fill="#fff"/></svg></button>
            <button aria-label="Chrome"><svg><use href="#chrome"/></svg></button>
            <button class="run" aria-label="Spotify"><svg viewBox="0 0 20 20"><circle cx="10" cy="10" r="9.500" fill="#25d366"/><path d="M4.500 7q6-2 11 1M5 10.500q5-1.500 9 1M6 13.500q4-1 7 .8" fill="none" stroke="#111" stroke-width="1.600"/></svg></button>
            <button class="run" aria-label="OBS"><svg viewBox="0 0 20 20"><circle cx="9" cy="11" r="8.500" fill="#222" stroke="#bbb"/><path d="M9 4q-4 3 0 7 5 1 7-3M9 11q-1 5-6 5M9 11q4 3 3 7" fill="none" stroke="#bbb" stroke-width="1.500"/><circle cx="16" cy="4" r="4" fill="#e21c1c"/></svg></button>
            <button class="run" aria-label="Chrome, perfil"><svg viewBox="0 0 20 20"><use href="#chrome" y="2" width="17" height="17"/><circle cx="15.500" cy="4" r="4" fill="#b3aaa2"/><path d="M12 4q3-3 6 1" stroke="#3b302c" stroke-width="1.500" fill="none"/></svg></button>
        </div>
        <div class="tray">
            <svg class="ic s8"><use href="#up"/></svg>
            <svg class="tray-cloud" viewBox="0 0 20 14"><path d="M4 13q-4 0-4-3.500T4 6q1-5 6-5t6 5q4 0 4 3.500T16 13z" fill="#d0d0d0"/></svg>
            <svg class="ic s12 mic" viewBox="0 0 20 20"><rect x="7" y="1" width="6" height="11" rx="3"/><path d="M3 9q0 7 7 7t7-7M10 16v3"/></svg>
            <span class="lang">ESP<br>LAA</span>
            <svg class="ic s12" viewBox="0 0 20 20"><path d="M1 8q9-8 18 0M4 11q6-5 12 0M7 14q3-2 6 0M9.500 17h1" stroke-width="1.800"/></svg>
            <svg class="ic s12" viewBox="0 0 20 20"><path d="M1 7h4l5-4v14l-5-4H1zM13 7q2 3 0 6M16 4q4 6 0 12"/></svg>
            <svg class="battery" viewBox="0 0 20 12"><rect x="1" y="1" width="16" height="10" rx="2.500" fill="none" stroke="#ccc" stroke-width="1.500"/><path d="M3 3h6v6H3z" fill="#e3c64a"/><path d="M19 4v4" stroke="#ccc" stroke-width="1.500"/></svg>
            <span class="date">23:26<br>15/01/2026</span>
        </div>
    </footer>
</div>

<script src="chart.js"></script>
</body>
</html>
```
FILE: styles.css
```css
/* Basic Reset */
* {
    margin: 0;
    padding: 0;
    box-sizing: border-box;
}

body {
    font-family: Lato, "Noto Sans", sans-serif;
    font-size: 10px;
    line-height: 12px;
    color: #dbdbdb;
    background: #0f0f0f;
}

button {
    font: inherit;
    color: inherit;
    background: none;
    border: none;
    display: flex;
    align-items: center;
    justify-content: center;
    cursor: pointer;
}

.sprite {
    position: absolute;
    width: 0;
    height: 0;
}

.app {
    display: grid;
    grid-template-rows: 23px 28px 1fr 32px;
    height: 100vh;
    min-height: 600px;
}

/* Icons */
.ic {
    width: 16px;
    height: 16px;
    flex: none;
    fill: none;
    stroke: currentColor;
    stroke-width: 1.1;
    overflow: visible;
}

.s6 { width: 6px; height: 6px; stroke-width: 3; }
.s8 { width: 8px; height: 8px; stroke-width: 2.4; }
.s10 { width: 10px; height: 10px; stroke-width: 2; }
.s12 { width: 12px; height: 12px; stroke-width: 1.6; }
.s14 { width: 14px; height: 14px; stroke-width: 1.3; }
.s16 { width: 16px; height: 16px; }
.s18 { width: 18px; height: 18px; }
.dim { color: #7d7d7d; }

.coin {
    width: 12px;
    height: 12px;
    border-radius: 50%;
    flex: none;
}

.coin.green {
    background: #4fae4c;
    color: #fff;
    font-size: 5px;
    font-weight: 700;
    text-align: center;
}

.coin.big {
    width: 16px;
    height: 16px;
}

.flag {
    width: 9px;
    height: 9px;
    color: #26e3f0;
    flex: none;
}

.flag.blue { color: #2f6df0; }
.neg { color: #d22f4c; }
.pos { color: #3aa876; }

.badge {
    position: absolute;
    top: 0;
    right: 0;
    min-width: 11px;
    height: 11px;
    padding: 0 2px;
    border-radius: 6px;
    background: #d81f4a;
    color: #fff;
    font-size: 8px;
    line-height: 11px;
    font-weight: 700;
    text-align: center;
}

.badge.pink { background: #f07f9a; color: #5a1025; }
.badge.coral { background: #e5605c; color: #33110f; }

.vsep {
    width: 1px;
    height: 16px;
    background: #3d3d3d;
    flex: none;
}

/* Window tabs */
.tabs {
    display: flex;
    background: #3d3d3d;
    font-size: 9px;
}

.tab {
    width: 154px;
    padding: 0 5px 0 8px;
    display: flex;
    align-items: center;
    gap: 3px;
    white-space: nowrap;
    border-right: 1px solid #555;
}

.tab.active {
    background: #0f0f0f;
    border-right: none;
}

.tab i {
    border: 3px solid transparent;
    flex: none;
}

.tab i.down { border-top: 6px solid #d22f4c; border-bottom: 0; }
.tab i.up { border-bottom: 6px solid #3aa876; border-top: 0; }

.fade {
    -webkit-mask-image: linear-gradient(90deg, #000 40%, rgba(0, 0, 0, 0.3));
    mask-image: linear-gradient(90deg, #000 40%, rgba(0, 0, 0, 0.3));
}

.tab b { font-size: 8px; }
.tab-close { margin-left: auto; width: 8px; }
.new-tab { width: 30px; color: #999; }

.window-tools {
    margin-left: auto;
    display: flex;
}

.window-tools button { width: 33px; }

/* Top toolbar */
.toolbar {
    display: flex;
    align-items: center;
    padding-top: 2px;
    font-size: 9px;
    font-weight: 700;
    white-space: nowrap;
    background: #0f0f0f;
}

.avatar {
    position: relative;
    width: 34px;
    height: 24px;
}

.avatar svg {
    width: 18px;
    height: 18px;
}

.symbol-box {
    display: flex;
    height: 20px;
    border: 1px solid #3d3d3d;
    border-radius: 10px;
    margin-left: 1px;
}

.symbol { width: 65px; gap: 4px; border-right: 1px solid #3d3d3d; }
.gem { width: 34px; gap: 5px; }
.add { width: 26px; margin-right: 2px; }
.intervals { display: flex; margin: 0 2px; }
.intervals button { height: 22px; padding: 0 4px; border-radius: 4px; }
.intervals .on { background: #3d3d3d; }
.pad { padding: 0 8px; gap: 5px; }
.pad.narrow { padding: 0 6px; }
.vsep.after { margin-left: 4px; }

.toolbar-right {
    margin-left: auto;
    display: flex;
    align-items: center;
    gap: 11px;
    padding-right: 3px;
}

.layout-name {
    flex-direction: column;
    width: 36px;
    line-height: 9px;
}

.layout-name small {
    font-size: 7px;
    line-height: 8px;
    color: #2a50f0;
}

.rounds,
.actions {
    display: flex;
    gap: 4px;
}

.actions { gap: 6px; }

.round {
    width: 15px;
    height: 15px;
    border-radius: 50%;
    border: 1px solid #3d3d3d;
    font-size: 7px;
    font-weight: 700;
}

.round.white { background: #fff; color: #111; border-color: #fff; }

.pill {
    height: 20px;
    padding: 0 7px;
    border: 1px solid #3d3d3d;
    border-radius: 10px;
    background: #000;
    color: #fff;
}

.pill.white { background: #fff; color: #222; }

/* Main area */
.workspace {
    display: grid;
    grid-template-columns: 37px 1fr 178px 30px;
    min-height: 0;
    border-top: 2px solid #2e2e2e;
    border-bottom: 1px solid #3d3d3d;
}

.draw-rail {
    display: flex;
    flex-direction: column;
    align-items: center;
    padding: 5px 3px 10px 2px;
    border-right: 2px solid #2e2e2e;
}

.draw-rail button {
    width: 24px;
    height: 25px;
    border-radius: 4px;
    flex: none;
}

.draw-rail hr,
.widget-rail hr {
    width: 24px;
    margin: 5px 0;
    border: none;
    border-top: 1px solid #4a4a4a;
}

.draw-rail .on,
.widget-rail .on { background: #3d3d3d; }

.draw-rail .fav {
    margin-top: auto;
    height: 24px;
    background: #f5f5f5;
    color: #111;
}

.center {
    display: flex;
    flex-direction: column;
    min-width: 0;
}

/* Chart */
.chart {
    flex: 1;
    min-height: 0;
    display: grid;
    grid-template-columns: 1fr 44px;
    grid-template-rows: 1fr 18px;
    background: #9699a3;
    color: #fff;
    border-radius: 3px 3px 0 0;
}

.plot {
    position: relative;
    overflow: hidden;
}

.canvas {
    display: block;
    width: 100%;
    height: 100%;
}

.candle-up { fill: #2463c4; }
.candle-down { fill: #08090c; }
.zone { fill: rgba(90, 90, 90, 0.5); }
.zone-line { fill: none; stroke: #fff; stroke-width: 1; }
.level { fill: none; stroke: #fff; stroke-width: 1; }
.level.soft { stroke: #ced0d6; }
.trend-red { stroke: #c23a5c; stroke-width: 1; }
.swing { fill: none; stroke: #fff; stroke-width: 1.3; }
.arrow-end { fill: #e4e5e9; }
.guide { stroke: #575a63; stroke-dasharray: 1 2; }
.handle { fill: #8d9099; stroke: #2747a8; stroke-width: 1.3; }
.resize { fill: #000; stroke: #fff; }

.add-text {
    font-family: "Open Sans", sans-serif;
    font-size: 11px;
    font-style: italic;
    fill: #40434a;
}

.add-plus { font-size: 16px; font-style: normal; }

.legend {
    position: absolute;
    top: 5px;
    left: 6px;
    display: flex;
    align-items: center;
    gap: 3px;
    font-size: 11px;
    font-weight: 500;
}

.legend .flag { margin: 0 6px 0 4px; }

.live {
    width: 6px;
    height: 6px;
    border-radius: 50%;
    background: #1a9c72;
}

.quotes {
    position: absolute;
    top: 22px;
    left: 6px;
    display: flex;
    align-items: center;
}

.quote {
    flex-direction: column;
    width: 48px;
    height: 22px;
    border: 1px solid;
    border-radius: 3px;
    background: #fff;
    font-size: 9px;
    line-height: 9px;
    font-weight: 500;
}

.quote small { font-size: 7px; font-weight: 400; }
.sell { color: #c9264a; }
.buy { color: #2846c8; }
.spread { width: 19px; text-align: center; font-size: 7px; color: #333; }

.float-bar {
    position: absolute;
    display: flex;
    align-items: center;
    border-radius: 4px;
}

.ghost {
    top: 53px;
    left: 19px;
    height: 24px;
    width: 296px;
    padding: 0 6px 0 21px;
    justify-content: space-between;
    background: #85878c;
    color: #a3a5aa;
    font-weight: 700;
}

.ghost .width { display: flex; align-items: center; gap: 3px; }

.favorites {
    top: 25px;
    left: 374px;
    width: 396px;
    height: 25px;
    padding: 0 0 0 5px;
    background: #1c1c1c;
    color: #dbdbdb;
    box-shadow: 0 1px 3px rgba(0, 0, 0, 0.5);
}

.favorites button { flex: 1; height: 25px; }
.grip { width: 6px; height: 12px; color: #666; margin-right: 4px; }

.tv-logo {
    position: absolute;
    left: 8px;
    bottom: 9px;
    width: 21px;
    height: 12px;
    fill: #000;
    stroke: #fff;
    stroke-width: 3;
    paint-order: stroke;
    overflow: visible;
}

#tv { overflow: visible; }

.nav-buttons {
    position: absolute;
    left: 449px;
    bottom: 22px;
    display: flex;
    gap: 5px;
}

.nav-buttons button {
    width: 16px;
    height: 16px;
    border-radius: 3px;
    background: #26272a;
    color: #fff;
    box-shadow: 0 1px 2px rgba(0, 0, 0, 0.4);
}

.nav-buttons .apart { margin-left: 6px; }

.event {
    position: absolute;
    left: 697px;
    bottom: 1px;
    width: 16px;
    height: 16px;
}

.tag {
    position: absolute;
    right: 0;
    padding: 0 2px;
    font-size: 8px;
    line-height: 11px;
}

.max-tag { top: 118px; background: #e7f1fa; color: #40485a; }
.last-tag { top: 179px; background: #000; font-weight: 500; }
.cross-tag { top: 206px; height: 14px; padding: 1px; background: #111; }

/* Price axis */
.price-axis {
    position: relative;
    overflow: hidden;
    border-left: 1px solid #2c2d31;
    font-size: 8px;
    font-weight: 700;
}

.currency {
    position: absolute;
    top: 3px;
    left: 2px;
    width: 39px;
    height: 17px;
}

.currency select {
    width: 100%;
    height: 100%;
    padding-left: 4px;
    border: none;
    border-radius: 3px;
    appearance: none;
    background: #fff;
    color: #333;
    font: 8px/17px Lato, sans-serif;
}

.currency .ic {
    position: absolute;
    right: 3px;
    top: 6px;
    color: #111;
}

.prices {
    height: 100%;
    padding-top: 38px;
    display: flex;
    flex-direction: column;
    justify-content: space-between;
}

.prices span { padding-left: 4px; line-height: 12px; }

.price {
    position: absolute;
    left: 0;
    right: 3px;
    padding-left: 4px;
    line-height: 12px;
}

.price small { display: block; font-size: 8px; line-height: 8px; font-weight: 400; }
.price.max { top: 117px; background: #e7f1fa; color: #30384a; }
.price.last { top: 178px; height: 21px; background: #000; }
.price.range-top { top: 199px; right: 0; background: #2b50ea; }
.price.range-bottom { top: 216px; right: 0; background: #2b50ea; }
.price.cursor { top: 206px; line-height: 13px; background: #0b0b0b; }

/* Time axis */
.time-axis {
    position: relative;
    border-top: 1px solid #2c2d31;
    overflow: hidden;
}

.time-axis svg {
    display: block;
    width: 100%;
    height: 17px;
}

.time-axis text {
    font-size: 8px;
    font-weight: 700;
    fill: #fff;
    text-anchor: middle;
}

.time {
    position: absolute;
    top: 0;
    height: 15px;
    padding: 0 6px;
    font-size: 8px;
    line-height: 16px;
    white-space: nowrap;
    font-weight: 500;
}

.time span { margin-left: 5px; }
.time.range-start { left: 524px; width: 91px; background: #2b57f2; }
.time.cursor { left: 626px; width: 89px; background: #000; box-shadow: -5px 0 #2b57f2; }

.axis-settings {
    border-top: 1px solid #2c2d31;
    border-left: 1px solid #2c2d31;
    color: #222;
}

/* Range bar */
.ranges {
    display: flex;
    align-items: center;
    gap: 8px;
    height: 26px;
    padding: 0 7px 0 10px;
    font-size: 9px;
    font-weight: 500;
}

.ranges .vsep { margin-right: 2px; }
.utc { margin-left: auto; }

/* Trading panel */
.trading {
    height: 47px;
    border-top: 3px solid #2e2e2e;
}

.trading-tabs {
    display: flex;
    height: 24px;
    background: #1f1f1f;
}

.trading-tab {
    padding: 0 5px;
    background: #0f0f0f;
}

.trading-tools {
    margin-left: auto;
    display: flex;
    align-items: center;
    gap: 12px;
    padding-right: 7px;
}

.low { margin-top: 8px; }

/* Watchlist */
.watch {
    position: relative;
    display: flex;
    flex-direction: column;
    border-left: 3px solid #2e2e2e;
    border-right: 1px solid #3d3d3d;
}

.collapse {
    position: absolute;
    left: -2px;
    bottom: 39px;
    width: 6px;
    height: 16px;
    border-radius: 3px;
    background: #0f0f0f;
}

.watch-head {
    display: flex;
    align-items: center;
    gap: 12px;
    height: 32px;
    padding: 0 11px 0 10px;
}

.watch-name {
    margin-right: auto;
    gap: 5px;
    font-weight: 700;
    white-space: nowrap;
}

.watch-lists {
    display: flex;
    gap: 4px;
    padding: 4px 9px 5px;
}

table {
    width: 100%;
    border-collapse: collapse;
    font-size: 9px;
}

th {
    height: 23px;
    padding: 0 9px 0 10px;
    font-weight: 400;
    color: #9c9c9c;
    text-align: left;
    border-bottom: 5px solid #0f0f0f;
    box-shadow: inset 0 -1px #2e2e2e;
}

td {
    height: 20px;
    border-bottom: 1px solid #2e2e2e;
}

td:last-child,
th:last-child {
    text-align: right;
    padding-right: 9px;
}

.cell {
    display: flex;
    align-items: center;
    gap: 2px;
}

.cell .flag { height: 10px; width: 8px; }
.cell .coin { margin: 0 2px 0 1px; }
.selected { outline: 1px solid #bdbdbd; outline-offset: -1px; border-radius: 3px; }

.details {
    margin-top: auto;
    height: 33px;
    display: flex;
    align-items: center;
    gap: 11px;
    padding: 0 11px 0 10px;
    border-top: 2px solid #2e2e2e;
    font-size: 9px;
}

.details b { margin: 0 auto 0 -6px; }

/* Widget rail */
.widget-rail {
    display: flex;
    flex-direction: column;
    align-items: center;
    padding: 4px 0 0;
}

.widget-rail button {
    position: relative;
    width: 26px;
    height: 30px;
    flex: none;
}

.widget-rail .badge { top: 3px; }
.widget-rail .on { height: 25px; border-radius: 4px; margin-bottom: 2px; }
.widget-rail .spacer { flex: 1; }
.widget-rail hr { margin: 4px 0; }

.products svg {
    width: 24px;
    height: 24px;
}

/* Taskbar */
.taskbar {
    display: grid;
    grid-template-columns: 1fr auto 1fr;
    align-items: center;
    background: #1c1c1c;
    font-size: 9px;
    line-height: 11px;
}

.weather {
    display: flex;
    align-items: center;
    gap: 3px;
    padding-left: 11px;
}

.cloud {
    position: relative;
    width: 20px;
    height: 20px;
}

.cloud svg { width: 17px; height: 12px; margin-top: 5px; }

.dock {
    display: flex;
    align-items: center;
}

.dock button {
    position: relative;
    width: 29px;
    height: 30px;
}

.dock button svg {
    width: 17px;
    height: 17px;
}

.dock .badge { top: 2px; right: 2px; }

.run::after {
    content: "";
    position: absolute;
    bottom: 0;
    width: 4px;
    height: 2px;
    border-radius: 1px;
    background: #999;
}

.current { background: #2e2e2e; border-radius: 4px; }
.current::after { width: 11px; background: #e58a94; }

.find {
    display: flex;
    align-items: center;
    gap: 7px;
    width: 147px;
    height: 22px;
    padding: 0 2px 0 8px;
    margin: 0 3px;
    border-radius: 11px;
    background: #3a3a3a;
}

.find input {
    flex: 1;
    min-width: 0;
    border: none;
    outline: none;
    background: none;
    color: #ccc;
    font: 9px/12px Lato, sans-serif;
}

.find input::placeholder { color: #c4c4c4; }
.find-art { width: 34px; height: 18px; }

.tray {
    display: flex;
    align-items: center;
    justify-content: flex-end;
    gap: 5px;
    padding-right: 12px;
    text-align: right;
}

.tray-cloud { width: 12px; height: 9px; margin: 0 5px 0 8px; }
.mic { color: #c9876a; margin-right: 8px; }
.lang { text-align: center; margin-right: 8px; }
.battery { width: 14px; height: 8px; }
.date { margin-left: 3px; }
```
FILE: chart.js
```js
const NS = 'http://www.w3.org/2000/svg';

// x, high, body top, body bottom, low, up
const candles = [
    [0,509,509,542,542,0],[3,534,536,542,542,1],[5,534,535,542,542,0],[13,534,538,542,542,0],[18,535,537,542,542,0],
    [20,520,535,540,542,1],[22,507,511,535,538,1],[25,505,507,512,515,1],[27,499,507,510,514,0],[30,500,503,509,512,1],
    [32,485,487,504,506,1],[34,484,487,505,511,0],[37,479,490,503,507,1],[39,493,494,504,524,0],[42,492,494,505,506,1],
    [44,475,477,495,497,1],[46,470,476,478,482,0],[49,452,454,478,480,1],[51,450,453,472,486,0],[54,470,471,503,508,0],
    [56,488,502,505,516,0],[59,482,487,504,517,1],[61,480,485,497,505,0],[64,485,496,505,508,0],[66,502,504,527,528,0],
    [69,517,526,536,540,0],[71,523,533,539,542,0],[73,529,535,542,542,0],[76,533,535,541,542,1],[78,494,500,536,540,1],
    [81,495,503,526,530,0],[83,511,520,527,530,0],[86,523,527,542,542,0],[108,525,530,542,542,1],[110,523,529,531,542,1],
    [113,529,530,542,542,0],[115,538,540,542,542,0],[130,525,527,542,542,1],[132,515,518,528,530,1],[135,510,519,530,533,0],
    [137,505,507,528,530,1],[140,488,490,507,508,1],[142,489,490,494,495,0],[144,483,485,494,495,1],[147,480,482,492,494,0],
    [149,478,480,491,493,1],[152,473,477,480,481,1],[154,470,474,476,478,0],[157,461,463,475,477,1],[159,457,461,466,471,0],
    [161,459,464,466,467,1],[164,453,464,502,505,0],[166,492,497,520,523,0],[169,515,520,542,542,0],[186,492,494,542,542,1],
    [189,461,465,495,497,1],[191,427,455,467,473,1],[194,444,448,455,465,1],[196,437,448,456,458,0],[199,445,447,454,456,1],
    [201,432,437,450,452,1],[204,423,425,437,440,1],[206,415,418,428,430,1],[209,408,414,424,426,1],[211,403,406,415,418,1],
    [213,402,405,408,411,1],[215,404,406,430,441,0],[218,425,430,444,445,0],[220,426,432,443,460,1],[223,399,405,433,434,1],
    [225,379,388,405,406,1],[228,384,390,399,402,0],[230,388,392,396,400,1],[233,388,390,397,398,1],[235,388,390,402,406,0],
    [237,387,391,400,402,1],[240,383,388,396,400,1],[242,374,389,400,401,0],[244,393,400,406,414,0],[247,385,387,407,417,1],
    [249,378,381,389,390,1],[252,362,364,381,382,1],[254,361,364,372,378,0],[257,354,370,385,388,0],[259,366,370,383,386,1],
    [262,364,367,375,378,0],[264,352,363,372,374,1],[266,362,363,392,394,0],[269,380,385,392,396,1],[271,366,369,386,387,1],
    [274,366,367,370,380,1],[277,357,362,369,380,1],[279,335,337,364,366,1],[281,333,336,349,368,0],[284,334,335,348,350,1],
    [286,328,332,340,342,1],[289,328,331,336,345,0],[291,332,336,345,348,0],[294,323,328,345,347,1],[296,322,325,330,331,1],
    [298,319,325,328,329,0],[301,325,328,330,331,0],[304,325,329,367,371,0],[306,345,353,367,369,1],[309,347,350,361,367,1],
    [311,351,353,366,370,0],[313,364,367,382,396,0],[316,380,382,396,397,0],[318,368,370,396,397,1],[321,354,362,372,374,1],
    [323,361,363,368,372,0],[325,362,367,373,374,1],[328,366,368,391,393,0],[331,390,391,394,404,0],[333,382,384,394,417,1],
    [336,374,384,390,407,0],[338,385,391,394,423,1],[340,365,368,393,395,1],[343,366,368,384,386,0],[345,376,378,384,390,1],
    [348,373,377,385,388,1],[350,375,378,385,386,0],[353,373,378,386,388,1],[355,366,368,385,387,1],[357,364,369,387,388,0],
    [360,386,387,391,392,0],[362,388,391,399,401,0],[364,397,400,405,407,0],[367,402,402,413,415,0],[370,411,412,425,434,0],
    [372,409,412,422,424,1],[375,402,411,414,417,0],[377,409,412,414,428,1],[380,407,411,413,420,1],[382,410,411,414,420,1],
    [384,410,411,425,426,0],[386,417,420,425,444,1],[389,407,417,424,430,0],[391,403,410,422,423,1],[394,379,382,411,412,1],
    [396,367,370,382,391,1],[399,367,371,377,388,1],[401,369,370,389,390,0],[404,384,385,389,390,1],[406,350,352,384,385,1],
    [409,347,350,353,356,1],[411,341,349,353,356,0],[414,350,352,371,374,0],[416,360,363,371,373,1],[418,351,361,365,368,1],
    [420,360,361,371,373,0],[423,362,365,370,372,1],[426,357,362,368,370,1],[428,350,353,363,364,1],[430,353,354,361,363,0],
    [433,350,358,364,367,0],[436,351,356,361,364,1],[438,354,357,360,361,1],[440,350,353,358,362,1],[443,345,354,368,372,0],
    [446,330,343,368,374,1],[448,325,326,343,344,1],[450,300,303,327,328,1],[453,299,306,315,320,0],[455,301,305,341,343,0],
    [458,318,323,341,342,1],[460,316,319,325,327,1],[463,304,308,320,322,1],[465,300,303,310,312,1],[468,257,262,307,308,1],
    [470,190,197,264,265,1],[472,195,197,223,224,0],[475,204,222,223,232,0],[477,213,221,226,228,0],[479,215,222,230,233,0],
    [482,206,209,222,224,1],[484,208,212,216,218,0],[487,196,199,210,212,1],[490,184,186,199,200,1],[492,186,187,196,198,0],
    [495,185,188,196,198,1],[497,190,195,203,212,0],[499,190,194,203,210,1],[502,155,159,197,198,1],[504,157,160,179,181,0],
    [507,145,154,178,179,1],[509,140,153,160,170,0],[512,148,158,162,168,0],[514,151,160,167,168,0],[516,157,161,168,170,1],
    [519,160,167,191,193,0],[521,182,184,192,194,1],[524,182,183,189,190,1],[526,182,183,199,204,0],[529,195,199,214,215,0],
    [531,186,189,213,215,1],[534,180,187,190,196,1],[536,185,186,190,191,1],[538,179,188,193,196,0],[541,186,191,207,218,0],
    [543,200,206,209,210,0],[546,188,192,208,210,1],[548,187,192,203,206,0],[551,183,195,203,205,1],[553,190,197,202,204,1],
    [556,192,194,202,214,1],[558,158,163,191,192,1],[561,132,140,172,178,1],[563,139,142,157,179,0],[565,150,154,163,165,0],
    [568,153,154,196,199,0],[570,184,187,197,200,0],[573,184,190,200,201,1],[575,183,184,204,220,0],[578,195,202,205,210,1],
    [580,185,187,202,203,1],[583,166,168,187,188,1],[585,154,156,168,170,1],[588,145,149,156,160,1],[590,141,143,152,154,1],
    [592,140,141,144,158,1],[595,127,140,155,157,0],[597,128,129,155,156,1],[600,127,131,138,145,0],[602,128,134,137,144,1],
    [605,127,131,139,142,0],[607,130,134,139,140,1],[609,130,136,144,146,0],[612,126,130,141,143,1],[614,125,128,132,137,0],
    [617,128,133,157,172,0],[619,150,157,160,178,1],[621,157,158,160,175,0],[624,156,159,163,180,0],[626,136,139,163,164,1],
    [629,123,126,140,142,1],[631,125,127,137,142,0],[634,130,137,145,150,0],[636,143,145,161,163,0],[638,157,160,164,166,1],
    [641,158,162,172,202,0],[644,168,169,184,189,0],[646,179,181,187,191,0],[648,184,187,192,204,0],[651,190,191,194,204,0],
    [653,164,167,190,192,1],[656,166,168,180,182,0],[658,175,176,180,182,1],[661,168,170,176,178,1],[663,154,156,169,170,1],
    [666,150,156,159,160,0],[668,152,158,163,165,1],[671,161,162,197,207,0],[673,163,170,197,200,1],[675,158,162,176,178,1],
    [678,148,160,175,178,0],[680,155,160,173,175,1],[683,155,158,163,165,0],[685,152,157,163,166,0],[688,157,162,169,172,0],
    [690,158,161,173,180,1],[692,152,161,172,180,0],[694,167,172,180,182,0],[697,176,179,186,188,0],[700,180,186,190,191,0],
    [702,184,187,189,190,0],[705,182,183,188,189,1]
];

function bar(parent, x, y, width, height, name) {
    const r = document.createElementNS(NS, 'rect');
    r.setAttribute('x', x);
    r.setAttribute('y', y);
    r.setAttribute('width', width);
    r.setAttribute('height', height);
    r.setAttribute('class', name);
    parent.appendChild(r);
}

const layer = document.getElementById('candles-layer');
candles.forEach(([x, high, top, bottom, low, up]) => {
    const name = up ? 'candle-up' : 'candle-down';
    bar(layer, x - 1, top, 2, Math.max(bottom - top, 1), name);
    bar(layer, x - 0.5, high, 1, low - high, name);
});

// Price scale, every 20 points
const prices = document.getElementById('prices');
for (let p = 4700; p >= 4340; p -= 20) {
    const label = document.createElement('span');
    label.textContent = '4.' + (p - 4000) + ',00';
    prices.appendChild(label);
}

// Time scale
const days = [[31, '30'], [87, '31'], [130, '2026'], [186, '4'], [256, '6'], [313, '7'], [369, '8'], [425, '9'],
    [467, '11'], [748, '18'], [819, '20'], [875, '21'], [931, '22'], [988, '23']];
const times = document.getElementById('times');
days.forEach(([x, label]) => {
    const t = document.createElementNS(NS, 'text');
    t.setAttribute('x', x);
    t.setAttribute('y', 11);
    t.textContent = label;
    times.appendChild(t);
});
```
